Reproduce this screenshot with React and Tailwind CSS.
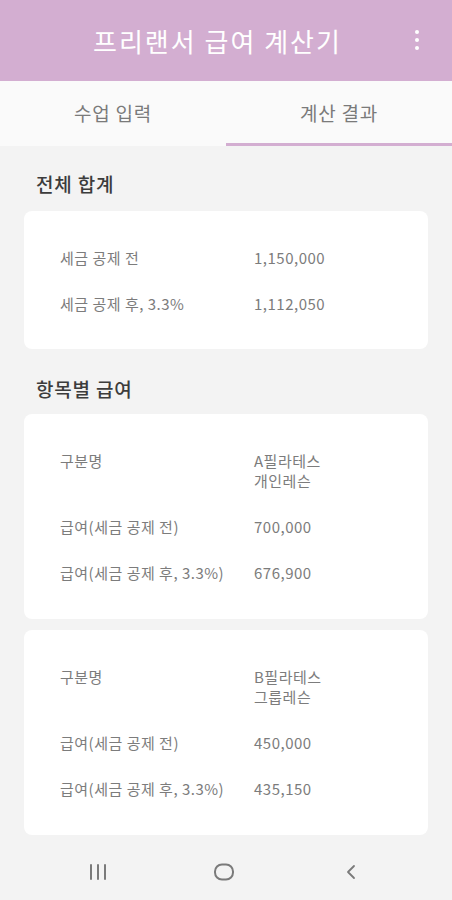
import { Fragment } from "react";

const summary = [
  { label: "세금 공제 전", value: "1,150,000" },
  { label: "세금 공제 후, 3.3%", value: "1,112,050" },
];

const items = [
  { name: ["A필라테스", "개인레슨"], before: "700,000", after: "676,900" },
  { name: ["B필라테스", "그룹레슨"], before: "450,000", after: "435,150" },
];

function Row({ label, children }) {
  return (
    <div className="flex text-[15px] leading-[20px] tracking-[0.5px] text-[#7c7c7c]">
      <div className="w-[194px] shrink-0">{label}</div>
      <div>{children}</div>
    </div>
  );
}

function Card({ children, className = "" }) {
  return (
    <div className={`bg-white rounded-[8px] pl-[36px] pr-4 pt-[37px] flex flex-col gap-[26px] ${className}`}>
      {children}
    </div>
  );
}

export default function App() {
  return (
    <div
      className="h-[900px] w-full flex flex-col bg-[#f3f3f3] overflow-hidden"
      style={{ fontFamily: '"Noto Sans CJK KR", Roboto, "Noto Sans", sans-serif' }}
    >
      {/* App bar */}
      <div className="h-[81px] shrink-0 bg-[#d3aed1] flex items-center">
        <h1 className="ml-[93px] text-[26px] text-white font-normal tracking-[2px]">프리랜서 급여 계산기</h1>
        <div className="ml-auto mr-[33px] flex flex-col gap-[4px] mb-[2px]">
          <span className="w-[4px] h-[4px] rounded-full bg-white" />
          <span className="w-[4px] h-[4px] rounded-full bg-white" />
          <span className="w-[4px] h-[4px] rounded-full bg-white" />
        </div>
      </div>

      {/* Tabs */}
      <div className="h-[65px] shrink-0 bg-[#fafafa] grid grid-cols-2 text-[19px] tracking-[0.8px] text-[#7a7a7a]">
        <div className="flex items-center justify-center">수업 입력</div>
        <div className="flex items-center justify-center border-b-[3px] border-[#d3aed1] pt-[3px]">계산 결과</div>
      </div>

      {/* Content */}
      <div className="flex-1 overflow-hidden px-[24px]">
        <h2 className="mt-[25px] mb-[14px] pl-[12px] text-[19px] leading-[26px] tracking-[0.8px] font-medium text-[#3c3c3c]">전체 합계</h2>
        <Card className="pb-[35px]">
          {summary.map((s) => (
            <Row key={s.label} label={s.label}>{s.value}</Row>
          ))}
        </Card>

        <h2 className="mt-[27px] mb-[12px] pl-[12px] text-[19px] leading-[26px] tracking-[0.8px] font-medium text-[#3c3c3c]">항목별 급여</h2>
        <div className="flex flex-col gap-[11px]">
          {items.map((it) => (
            <Card key={it.name[0]} className="pb-[36px]">
              <Row label="구분명">
                {it.name.map((n, i) => (
                  <Fragment key={n}>
                    {i > 0 && <br />}
                    {n}
                  </Fragment>
                ))}
              </Row>
              <Row label="급여(세금 공제 전)">{it.before}</Row>
              <Row label="급여(세금 공제 후, 3.3%)">{it.after}</Row>
            </Card>
          ))}
        </div>
      </div>

      {/* System navigation bar */}
      <div className="h-[57px] shrink-0 bg-[#f3f3f3] flex items-center">
        <svg width="18" height="18" viewBox="0 0 18 18" className="ml-[89px]">
          <g stroke="#7a7a7a" strokeWidth="2" strokeLinecap="round">
            <line x1="2" y1="2" x2="2" y2="16" />
            <line x1="9" y1="2" x2="9" y2="16" />
            <line x1="16" y1="2" x2="16" y2="16" />
          </g>
        </svg>
        <svg width="20" height="18" viewBox="0 0 20 18" className="ml-[107px]">
          <rect x="1" y="1.5" width="18" height="15" rx="7" fill="none" stroke="#7a7a7a" strokeWidth="2" />
        </svg>
        <svg width="12" height="16" viewBox="0 0 12 16" className="ml-[111px]">
          <polyline points="9,2 3,8 9,14" fill="none" stroke="#7a7a7a" strokeWidth="1.8" strokeLinecap="round" strokeLinejoin="round" />
        </svg>
      </div>
    </div>
  );
}
